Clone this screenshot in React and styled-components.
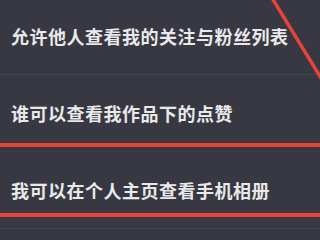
import React from 'react'
import styled, { createGlobalStyle } from 'styled-components'

const GlobalStyle = createGlobalStyle`
  html, body {
    margin: 0;
    padding: 0;
    background: #373841;
  }
  body {
    font-family: "Noto Sans CJK SC", "Noto Sans", sans-serif;
  }
`

const Screen = styled.div`
  position: relative;
  width: 320px;
  height: 240px;
  overflow: hidden;
  background: #373841;
`

const List = styled.div`
  display: flex;
  flex-direction: column;
  margin-top: -2px;
`

const Row = styled.div`
  display: flex;
  align-items: center;
  height: 77px;
  box-sizing: border-box;
  padding-left: 11px;
  border-bottom: 1px solid ${p => (p.faint ? '#3b3c46' : '#42434d')};
`

const Label = styled.span`
  color: #e9e9ec;
  font-size: 18px;
  font-weight: 700;
  letter-spacing: 0.5px;
  white-space: nowrap;
`

const Mark = styled.div`
  position: absolute;
  left: 0;
  right: 0;
  top: ${p => p.top}px;
  height: 4px;
  background: #e8433b;
`

const Slash = styled.svg`
  position: absolute;
  left: 0;
  top: 0;
  pointer-events: none;
`

const rows = [
  '允许他人查看我的关注与粉丝列表',
  '谁可以查看我作品下的点赞',
  '我可以在个人主页查看手机相册',
]

const App = () => {
  return (
    <Screen>
      <GlobalStyle />
      <List>
        {rows.map((text, i) => (
          <Row key={i} faint={i === 1}>
            <Label>{text}</Label>
          </Row>
        ))}
      </List>
      <Mark top={143} />
      <Mark top={213} />
      <Slash width="320" height="240" viewBox="0 0 320 240">
        <line x1="272" y1="-2" x2="324" y2="83" stroke="#e8433b" strokeWidth="3.5" />
      </Slash>
    </Screen>
  )
}

export default App
